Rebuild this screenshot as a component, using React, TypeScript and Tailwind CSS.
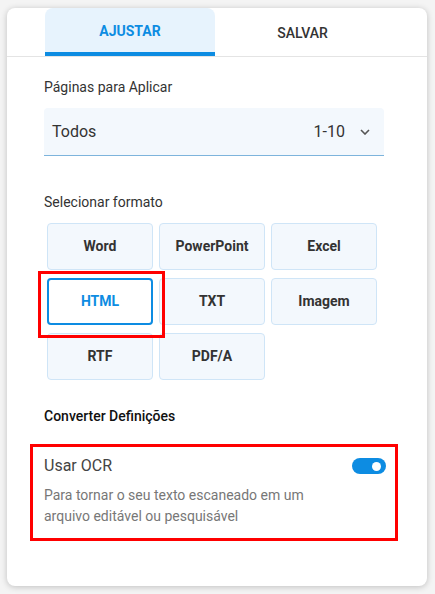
import React from "react";

const formats = ["Word", "PowerPoint", "Excel", "HTML", "TXT", "Imagem", "RTF", "PDF/A"];

export default function App() {
  return (
    <div className="min-h-[594px] bg-[#f4f4f4] pt-2 pl-[7px]" style={{ fontFamily: "Roboto, 'Noto Sans', sans-serif" }}>
      <div className="relative w-[420px] h-[578px] bg-white rounded-lg shadow-[0_1px_6px_rgba(0,0,0,0.22)]">
        {/* Tabs */}
        <div className="flex pl-[38px] border-b border-[#e4e4e4]">
          <div className="w-[170px] h-[48px] flex items-center justify-center rounded-t-lg bg-[#e7f3fd] border-b-4 border-[#0d8ce2] text-[14px] font-bold text-[#0d8ce2] pt-[3px]">
            AJUSTAR
          </div>
          <div className="w-[175px] h-[48px] flex items-center justify-center text-[14px] font-medium text-[#333] pt-[3px]">
            SALVAR
          </div>
        </div>

        <div className="px-[37px]">
          <div className="mt-[20px] text-[14px] leading-[20px] text-[#333]">Páginas para Aplicar</div>
          <div className="mt-[11px] h-[48px] w-[340px] flex items-center bg-[#f3f8fd] rounded-t border-b border-[#7db4dc] pl-[8px] pr-[14px]">
            <span className="text-[16px] text-[#333]">Todos</span>
            <span className="ml-auto text-[16px] text-[#333]">1-10</span>
            <svg className="ml-[15px]" width="10" height="6" viewBox="0 0 10 6" fill="none">
              <path d="M1 1l4 4 4-4" stroke="#555" strokeWidth="1.6" />
            </svg>
          </div>

          <div className="mt-[36px] text-[14px] leading-[20px] text-[#333]">Selecionar formato</div>
          <div className="mt-[11px] pl-[3px] grid grid-cols-[106px_106px_106px] gap-x-[6px] gap-y-[8px]">
            {formats.map((f) =>
              f === "HTML" ? (
                <div key={f} className="h-[47px] flex items-center justify-center rounded bg-white border-2 border-[#0d8ce2] text-[14px] font-bold text-[#0d8ce2]">
                  {f}
                </div>
              ) : (
                <div key={f} className="h-[47px] flex items-center justify-center rounded bg-[#f3f8fd] border border-[#cfe5f7] text-[14px] font-bold text-[#333]">
                  {f}
                </div>
              )
            )}
          </div>

          <div className="mt-[26px] text-[14px] leading-[20px] font-medium text-[#111]">Converter Definições</div>

          <div className="mt-[29px] flex items-center justify-between">
            <span className="text-[16px] leading-[22px] text-[#444]">Usar OCR</span>
            <div className="mr-[4px] w-[34px] h-[16px] rounded-full bg-[#0d8ce2] flex items-center justify-end pr-[5px]">
              <div className="w-[9px] h-[9px] rounded-full bg-white" />
            </div>
          </div>
          <div className="mt-[8px] max-w-[290px] text-[14px] leading-[21px] text-[#777]">
            Para tornar o seu texto escaneado em um arquivo editável ou pesquisável
          </div>
        </div>

        {/* annotation boxes */}
        <div className="absolute left-[31px] top-[263px] w-[127px] h-[67px] border-[3px] border-[#ff0000]" />
        <div className="absolute left-[23px] top-[436px] w-[368px] h-[97px] border-[3px] border-[#ff0000]" />
      </div>
    </div>
  );
}
